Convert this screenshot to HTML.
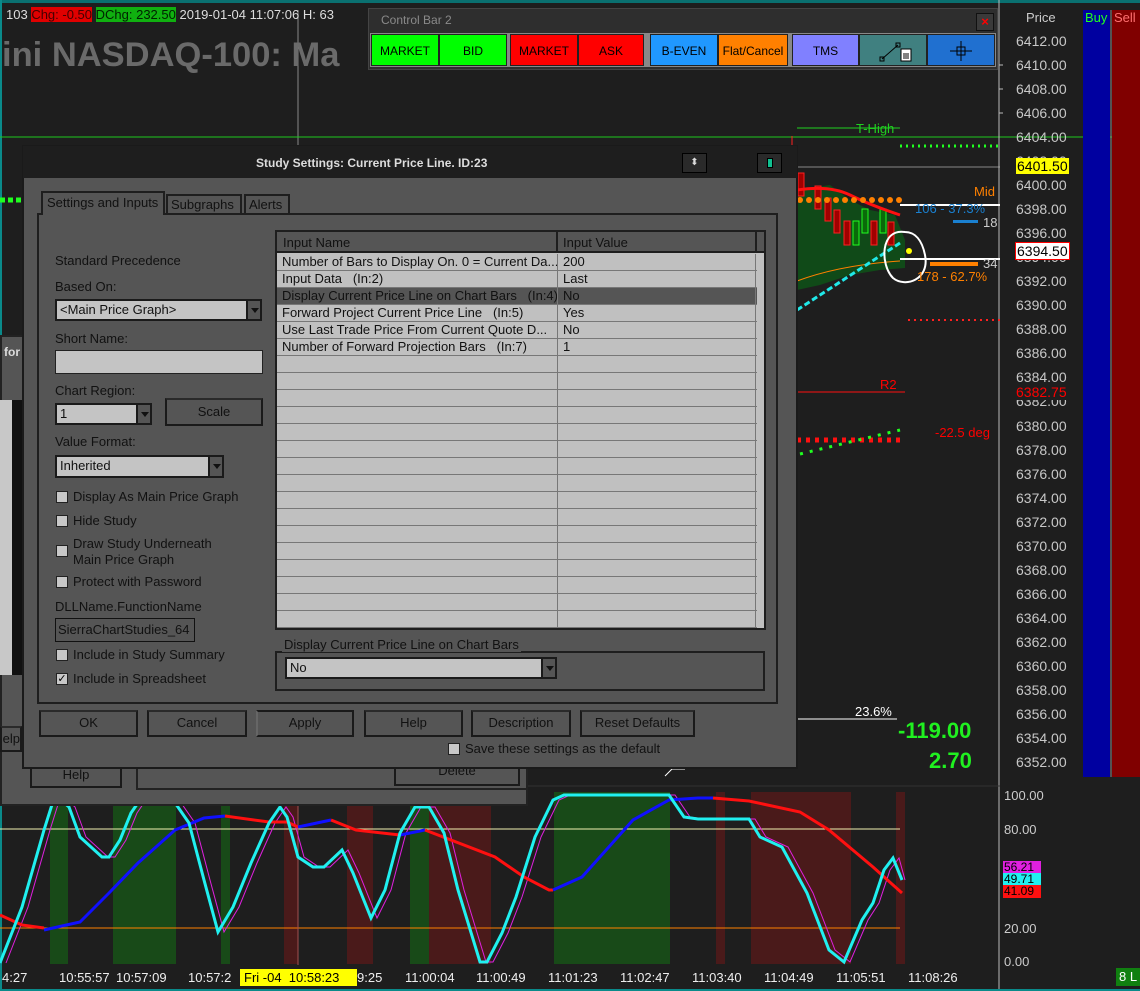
<!DOCTYPE html>
<html><head><meta charset="utf-8"><style>
*{margin:0;padding:0;box-sizing:border-box}
body{width:1140px;height:991px;background:#1e1e1e;position:relative;overflow:hidden;font-family:"Liberation Sans",sans-serif;font-size:13px}
.a{position:absolute}
.t{position:absolute;white-space:nowrap}
.btn{position:absolute;background:#555;border:2px solid #1a1a1a;border-top-color:#2a2a2a;color:#111;text-align:center;font-size:13px;line-height:22px}
.cb{position:absolute;width:12px;height:12px;background:#c8c8c8;border:1px solid #222}
.combo{position:absolute;background:#c4c4c4;border:2px solid #1a1a1a;color:#111;padding-left:3px;font-size:13px;line-height:18px}
.combo i{position:absolute;right:0;top:0;width:14px;height:100%;background:#555;border-left:2px solid #1a1a1a}
.combo i:after{content:"";position:absolute;left:3px;top:7px;border:4px solid transparent;border-top:5px solid #111}
.cbtn{position:absolute;top:34px;height:32px;color:#000;font-size:12px;text-align:center;line-height:32px;border:1px solid #222}
.row{position:absolute;left:0;width:480px;height:17px;border-bottom:1px solid #777;background:#c0c0c0;color:#111;font-size:13px;line-height:16px}
.row span{position:absolute;left:5px}
.row b{font-weight:normal;position:absolute;left:286px}
</style></head><body>
<svg class="a" style="left:0;top:0" width="1140" height="991">
<rect x="0" y="0" width="1140" height="3" fill="#0a7070"/>
<rect x="0" y="0" width="2" height="991" fill="#0a8a8a"/>
<line x1="298" y1="10" x2="298" y2="145" stroke="#888"/>
<line x1="0" y1="137" x2="1140" y2="137" stroke="#1ec81e"/>
<line x1="797" y1="167" x2="1000" y2="167" stroke="#888"/>
<line x1="999" y1="0" x2="999" y2="991" stroke="#bbb"/>
<rect x="1083" y="10" width="27" height="767" fill="#0000a0"/>
<rect x="1112" y="10" width="28" height="767" fill="#800000"/>
<line x1="1111" y1="10" x2="1111" y2="777" stroke="#888"/>
<line x1="0" y1="990" x2="1140" y2="990" stroke="#0a8a8a" stroke-width="2"/>
<line x1="0" y1="786" x2="1000" y2="786" stroke="#333"/>
<polygon points="797,190 830,185 850,200 870,210 895,215 905,240 905,268 880,270 850,275 820,285 797,290" fill="#104a18"/>
<g fill="#a00000" stroke="#ff2020">
<rect x="798" y="173" width="6" height="23"/><rect x="815" y="186" width="6" height="23"/><rect x="825" y="198" width="6" height="23"/><rect x="834" y="210" width="6" height="23"/><rect x="844" y="221" width="6" height="24"/><rect x="871" y="221" width="6" height="24"/><rect x="888" y="222" width="6" height="23"/></g>
<g fill="#0a6a0a" stroke="#20ff20"><rect x="853" y="221" width="6" height="24"/><rect x="862" y="209" width="6" height="24"/><rect x="880" y="209" width="6" height="24"/></g>
<path d="M797,190 Q830,185 850,195 T900,215" stroke="#ff1010" stroke-width="3" fill="none"/>
<g fill="#ff8000"><circle cx="800" cy="200" r="3"/><circle cx="809" cy="200" r="3"/><circle cx="818" cy="200" r="3"/><circle cx="827" cy="200" r="3"/><circle cx="836" cy="200" r="3"/><circle cx="845" cy="200" r="3"/><circle cx="854" cy="200" r="3"/><circle cx="863" cy="200" r="3"/><circle cx="872" cy="200" r="3"/><circle cx="881" cy="200" r="3"/><circle cx="890" cy="200" r="3"/><circle cx="899" cy="200" r="3"/></g>
<path d="M797,281 Q840,265 900,261" stroke="#ff8000" fill="none"/>
<path d="M797,310 L900,243" stroke="#20e8e8" stroke-width="3" stroke-dasharray="6,3" fill="none"/>
<path d="M905,232 C880,228 880,265 893,278 C905,288 930,280 925,255 C922,240 915,232 905,232Z" stroke="#fff" stroke-width="2" fill="none"/>
<circle cx="909" cy="251" r="3" fill="#ffff00"/>
<line x1="900" y1="205" x2="1000" y2="205" stroke="#fff" stroke-width="2"/>
<line x1="900" y1="259" x2="1000" y2="259" stroke="#fff" stroke-width="2"/>
<rect x="953" y="220" width="25" height="3" fill="#1a80d0"/>
<rect x="930" y="262" width="48" height="4" fill="#ff8000"/>
<line x1="900" y1="146" x2="1000" y2="146" stroke="#20ff20" stroke-width="3" stroke-dasharray="2,4"/>
<line x1="908" y1="320" x2="1000" y2="320" stroke="#ff2020" stroke-width="2" stroke-dasharray="2,4"/>
<line x1="797" y1="392" x2="905" y2="392" stroke="#ff1010"/>
<line x1="797" y1="128" x2="900" y2="128" stroke="#20d020"/>
<line x1="792" y1="136" x2="792" y2="145" stroke="#ff2020"/>
<line x1="797" y1="440" x2="903" y2="440" stroke="#ff1010" stroke-width="5" stroke-dasharray="4,5"/>
<path d="M800,454 L900,430" stroke="#20ff20" stroke-width="3" stroke-dasharray="3,7"/>
<line x1="0" y1="200" x2="22" y2="200" stroke="#20ff20" stroke-width="5" stroke-dasharray="5,3"/>
<line x1="797" y1="719" x2="897" y2="719" stroke="#fff"/>
<path d="M665,776 L672,769 L685,769" stroke="#fff" fill="none"/>
<g stroke="#bbb"><line x1="999" y1="65" x2="1003" y2="65"/><line x1="999" y1="89" x2="1003" y2="89"/><line x1="999" y1="113" x2="1003" y2="113"/></g>
<g fill="#184a18"><rect x="50" y="792" width="18" height="172"/><rect x="113" y="792" width="63" height="172"/><rect x="221" y="792" width="9" height="172"/><rect x="410" y="792" width="19" height="172"/><rect x="554" y="792" width="116" height="172"/></g>
<g fill="#4a1a1a"><rect x="284" y="792" width="14" height="172"/><rect x="347" y="792" width="26" height="172"/><rect x="429" y="792" width="62" height="172"/><rect x="716" y="792" width="9" height="172"/><rect x="751" y="792" width="100" height="172"/><rect x="896" y="792" width="9" height="172"/></g>
<line x1="0" y1="829" x2="900" y2="829" stroke="#f0f0b0"/>
<line x1="0" y1="928" x2="900" y2="928" stroke="#ff8000"/>
<line x1="298" y1="792" x2="298" y2="965" stroke="#a05050"/>
<polyline points="6,963 28,907 50,830 61,795 75,807 86,837 108,857 115,857 126,840 137,813 148,797 177,797 195,823 210,880 224,932 239,907 257,863 275,823 286,807 293,817 304,857 319,867 330,867 348,850 359,873 377,918 391,890 406,833 421,807 435,807 450,833 464,890 486,962 493,962 508,933 522,897 541,837 559,800 570,795 675,795 690,817 704,819 755,819 766,837 788,847 813,893 835,950 850,962 868,920 879,903 890,870 899,858 905,880" fill="none" stroke="#e020e0" stroke-width="1"/>
<polyline points="0,915 22,925 44,928" fill="none" stroke="#ff1010" stroke-width="3"/>
<polyline points="44,930 80,922 109,893 138,863 175,830 204,818 225,816" fill="none" stroke="#1010ff" stroke-width="3"/>
<polyline points="225,816 269,822 287,822 298,827" fill="none" stroke="#ff1010" stroke-width="3"/>
<polyline points="298,827 331,820" fill="none" stroke="#1010ff" stroke-width="3"/>
<polyline points="331,820 356,830 400,835" fill="none" stroke="#ff1010" stroke-width="3"/>
<polyline points="400,835 425,830" fill="none" stroke="#1010ff" stroke-width="3"/>
<polyline points="425,830 495,857 524,877 549,890 553,890" fill="none" stroke="#ff1010" stroke-width="3"/>
<polyline points="553,890 582,877 633,820 669,800 698,798 713,798" fill="none" stroke="#1010ff" stroke-width="3"/>
<polyline points="713,798 749,801 800,812 829,830 873,867 902,893" fill="none" stroke="#ff1010" stroke-width="3"/>
<polyline points="0,963 22,907 44,830 55,795 69,807 80,837 102,857 109,857 120,840 131,813 142,797 171,797 189,823 204,880 218,932 233,907 251,863 269,823 280,807 287,817 298,857 313,867 324,867 342,850 353,873 371,918 385,890 400,833 415,807 429,807 444,833 458,890 480,962 487,962 502,933 516,897 535,837 553,800 564,795 669,795 684,817 698,819 749,819 760,837 782,847 807,893 829,950 844,962 862,920 873,903 884,870 893,858 902,880" fill="none" stroke="#20f0f0" stroke-width="3"/>
<rect x="1003" y="861" width="38" height="12" fill="#e020e0"/><rect x="1003" y="873" width="38" height="12" fill="#20f0f0"/><rect x="1003" y="885" width="38" height="13" fill="#ff1010"/>
<rect x="1116" y="968" width="24" height="18" fill="#108010"/>
<rect x="240" y="969" width="117" height="17" fill="#ffff00"/>
</svg>

<div class="t" style="left:6px;top:7px;color:#ddd;font-size:13px">103 <span style="background:#e00000;color:#400">Chg: -0.50</span> <span style="background:#10b010;color:#020">DChg: 232.50</span> 2019-01-04 11:07:06 H: 63</div>
<div class="t" style="left:2px;top:36px;color:#6a6a6a;font-size:34.5px;font-weight:bold">ini NASDAQ-100: Ma</div>
<div class="t" style="left:1026px;top:10px;color:#ccc;font-size:13px">Price</div>
<div class="t" style="left:1085px;top:10px;color:#20ff20;font-size:13px">Buy</div>
<div class="t" style="left:1114px;top:10px;color:#ff7070;font-size:13px">Sell</div>
<div class="a" style="left:1016px;top:29px;color:#c8c8c8;font-size:14px;line-height:24.03px">6412.00<br>6410.00<br>6408.00<br>6406.00<br>6404.00<br>6402.00<br>6400.00<br>6398.00<br>6396.00<br>6394.00<br>6392.00<br>6390.00<br>6388.00<br>6386.00<br>6384.00<br>6382.00<br>6380.00<br>6378.00<br>6376.00<br>6374.00<br>6372.00<br>6370.00<br>6368.00<br>6366.00<br>6364.00<br>6362.00<br>6360.00<br>6358.00<br>6356.00<br>6354.00<br>6352.00</div>
<div class="t" style="left:1016px;top:158px;background:#ffff00;color:#000;font-size:14px;padding:0 1px">6401.50</div>
<div class="t" style="left:1015px;top:242px;background:#fff;border:1px solid #f00;color:#000;font-size:14px;padding:0 1px">6394.50</div>
<div class="t" style="left:1016px;top:384px;background:#1e1e1e;color:#f00;font-size:14px">6382.75</div>
<div class="t" style="left:856px;top:121px;color:#20d020">T-High</div>
<div class="t" style="left:974px;top:184px;color:#ff8000">Mid</div>
<div class="t" style="left:915px;top:201px;color:#1a80d0">106 - 37.3%</div>
<div class="t" style="left:983px;top:215px;color:#ccc">18</div>
<div class="t" style="left:983px;top:256px;color:#ccc">34</div>
<div class="t" style="left:917px;top:269px;color:#ff8000">178 - 62.7%</div>
<div class="t" style="left:880px;top:377px;color:#f00">R2</div>
<div class="t" style="left:935px;top:425px;color:#f00">-22.5 deg</div>
<div class="t" style="left:855px;top:704px;color:#fff">23.6%</div>
<div class="t" style="left:898px;top:718px;color:#20f020;font-size:22px;font-weight:bold">-119.00</div>
<div class="t" style="left:929px;top:748px;color:#20f020;font-size:22px;font-weight:bold">2.70</div>
<div class="t" style="left:1004px;top:788px;color:#ccc">100.00</div>
<div class="t" style="left:1004px;top:822px;color:#ccc">80.00</div>
<div class="t" style="left:1004px;top:921px;color:#ccc">20.00</div>
<div class="t" style="left:1004px;top:954px;color:#ccc">0.00</div>
<div class="t" style="left:1004px;top:860px;color:#000;font-size:12px">56.21</div>
<div class="t" style="left:1004px;top:872px;color:#000;font-size:12px">49.71</div>
<div class="t" style="left:1004px;top:884px;color:#000;font-size:12px">41.09</div>
<div class="t" style="left:1119px;top:969px;color:#fff">8 L</div>
<div class="t" style="top:970px;left:0;color:#eee;font-size:13px;width:1000px;height:18px">
<span class="t" style="left:2px">4:27</span><span class="t" style="left:59px">10:55:57</span><span class="t" style="left:116px">10:57:09</span><span class="t" style="left:188px">10:57:2</span><span class="t" style="left:244px;color:#000">Fri -04&nbsp; 10:58:23</span><span class="t" style="left:357px">9:25</span><span class="t" style="left:405px">11:00:04</span><span class="t" style="left:476px">11:00:49</span><span class="t" style="left:548px">11:01:23</span><span class="t" style="left:620px">11:02:47</span><span class="t" style="left:692px">11:03:40</span><span class="t" style="left:764px">11:04:49</span><span class="t" style="left:836px">11:05:51</span><span class="t" style="left:908px">11:08:26</span></div>

<div class="a" style="left:0;top:335px;width:528px;height:471px;background:#555;border:2px solid #222"></div>
<div class="t" style="left:4px;top:345px;color:#ddd;font-weight:bold;font-size:12px">for</div>
<div class="a" style="left:0;top:400px;width:12px;height:275px;background:#c8c8c8"></div>
<div class="a" style="left:12px;top:400px;width:10px;height:275px;background:#111"></div>
<div class="btn" style="left:0;top:726px;width:22px;height:26px;text-align:right">elp</div>
<div class="btn" style="left:30px;top:762px;width:92px;height:26px">Help</div>
<div class="a" style="left:136px;top:752px;width:392px;height:38px;border:2px solid #222"></div>
<div class="btn" style="left:394px;top:760px;width:126px;height:26px;line-height:18px">Delete</div>

<div class="a" style="left:368px;top:8px;width:630px;height:62px;background:#2e2e2e;border:1px solid #444"></div>
<div class="t" style="left:381px;top:13px;color:#8a8a8a;font-size:12px">Control Bar 2</div>
<div class="a" style="left:976px;top:13px;width:18px;height:18px;background:#3a3a3a;border:1px solid #111;color:#f00;font-size:13px;font-weight:bold;text-align:center;line-height:16px">×</div>
<div class="a" style="left:370px;top:33px;width:626px;height:34px;background:#888"></div>
<div class="cbtn" style="left:371px;width:68px;background:#00ff00">MARKET</div>
<div class="cbtn" style="left:439px;width:68px;background:#00ff00">BID</div>
<div class="cbtn" style="left:510px;width:68px;background:#ff0000">MARKET</div>
<div class="cbtn" style="left:578px;width:66px;background:#ff0000">ASK</div>
<div class="cbtn" style="left:650px;width:68px;background:#2098ff">B-EVEN</div>
<div class="cbtn" style="left:718px;width:70px;background:#ff8000">Flat/Cancel</div>
<div class="cbtn" style="left:792px;width:67px;background:#8080ff">TMS</div>
<div class="cbtn" style="left:859px;width:68px;background:#408080"><svg width="66" height="30" style="position:absolute;left:0;top:0"><path d="M22,24 L38,10" stroke="#000"/><rect x="20" y="22" width="4" height="4" fill="none" stroke="#000"/><rect x="36" y="8" width="4" height="4" fill="none" stroke="#000"/><rect x="41" y="14" width="10" height="12" fill="#fff" stroke="#000"/><path d="M43,19h6M43,21h6M43,23h6" stroke="#000"/></svg></div>
<div class="cbtn" style="left:927px;width:68px;background:#2070d0"><svg width="66" height="30" style="position:absolute;left:0;top:0"><path d="M33,6V26M22,16H44" stroke="#000"/><rect x="29" y="12" width="8" height="8" fill="none" stroke="#000"/></svg></div>

<div class="a" style="left:22px;top:145px;width:776px;height:624px;background:#555;border:2px solid #1a1a1a"></div>
<div class="a" style="left:23px;top:146px;width:774px;height:32px;background:#1e1e1e"></div>
<div class="t" style="left:256px;top:156px;color:#ddd;font-size:12px;font-weight:bold">Study Settings: Current Price Line. ID:23</div>
<div class="a" style="left:682px;top:153px;width:25px;height:20px;border:1px solid #000;background:#2a2a2a;color:#ddd;font-size:10px;text-align:center;line-height:18px">⬍</div>
<div class="a" style="left:757px;top:153px;width:25px;height:20px;border:1px solid #000;background:#2a2a2a"><div class="a" style="left:9px;top:4px;width:6px;height:10px;background:#10c090;border:1px solid #000"></div></div>
<div class="a" style="left:37px;top:213px;width:741px;height:491px;border:2px solid #1e1e1e"></div>
<div class="a" style="left:41px;top:191px;width:124px;height:24px;background:#555;border:2px solid #1e1e1e;border-bottom:none"></div>
<div class="t" style="left:47px;top:195px;color:#111">Settings and Inputs</div>
<div class="a" style="left:166px;top:194px;width:76px;height:20px;border:2px solid #1e1e1e;border-bottom:none"></div>
<div class="t" style="left:171px;top:197px;color:#111">Subgraphs</div>
<div class="a" style="left:244px;top:194px;width:46px;height:20px;border:2px solid #1e1e1e;border-bottom:none"></div>
<div class="t" style="left:249px;top:197px;color:#111">Alerts</div>

<div class="t" style="left:55px;top:253px;color:#111">Standard Precedence</div>
<div class="t" style="left:55px;top:279px;color:#111">Based On:</div>
<div class="combo" style="left:55px;top:299px;width:207px;height:22px">&lt;Main Price Graph&gt;<i></i></div>
<div class="t" style="left:55px;top:331px;color:#111">Short Name:</div>
<div class="a" style="left:55px;top:350px;width:208px;height:24px;background:#c4c4c4;border:1px solid #222"></div>
<div class="t" style="left:55px;top:383px;color:#111">Chart Region:</div>
<div class="combo" style="left:55px;top:403px;width:97px;height:22px">1<i></i></div>
<div class="btn" style="left:165px;top:398px;width:98px;height:28px;line-height:24px">Scale</div>
<div class="t" style="left:55px;top:434px;color:#111">Value Format:</div>
<div class="combo" style="left:55px;top:455px;width:169px;height:23px">Inherited<i></i></div>
<div class="cb" style="left:56px;top:491px"></div><div class="t" style="left:73px;top:489px;color:#111">Display As Main Price Graph</div>
<div class="cb" style="left:56px;top:515px"></div><div class="t" style="left:73px;top:513px;color:#111">Hide Study</div>
<div class="cb" style="left:56px;top:545px"></div><div class="t" style="left:73px;top:536px;color:#111;line-height:16px">Draw Study Underneath<br>Main Price Graph</div>
<div class="cb" style="left:56px;top:576px"></div><div class="t" style="left:73px;top:574px;color:#111">Protect with Password</div>
<div class="t" style="left:55px;top:599px;color:#111">DLLName.FunctionName</div>
<div class="a" style="left:55px;top:618px;width:140px;height:24px;border:1px solid #111"></div>
<div class="t" style="left:58px;top:622px;color:#111">SierraChartStudies_64</div>
<div class="cb" style="left:56px;top:649px"></div><div class="t" style="left:73px;top:647px;color:#111">Include in Study Summary</div>
<div class="cb" style="left:56px;top:673px;font-size:11px;line-height:10px;text-align:center;color:#000">✓</div><div class="t" style="left:73px;top:671px;color:#111">Include in Spreadsheet</div>

<div class="a" style="left:275px;top:230px;width:491px;height:400px;background:#c0c0c0;border:2px solid #1e1e1e;overflow:hidden">
<div class="a" style="left:0;top:0;width:487px;height:21px;background:#555;border-bottom:2px solid #1e1e1e"></div>
<div class="t" style="left:6px;top:3px;color:#111">Input Name</div>
<div class="a" style="left:279px;top:0;width:2px;height:21px;background:#1e1e1e"></div>
<div class="t" style="left:286px;top:3px;color:#111">Input Value</div>
<div class="a" style="left:478px;top:0;width:2px;height:21px;background:#1e1e1e"></div>
<div class="row" style="top:22px"><span>Number of Bars to Display On. 0 = Current Da...</span><b>200</b></div>
<div class="row" style="top:39px"><span>Input Data &nbsp; (In:2)</span><b>Last</b></div>
<div class="row" style="top:56px;background:#555"><span>Display Current Price Line on Chart Bars &nbsp; (In:4)</span><b>No</b></div>
<div class="row" style="top:73px"><span>Forward Project Current Price Line &nbsp; (In:5)</span><b>Yes</b></div>
<div class="row" style="top:90px"><span>Use Last Trade Price From Current Quote D...</span><b>No</b></div>
<div class="row" style="top:107px"><span>Number of Forward Projection Bars &nbsp; (In:7)</span><b>1</b></div>
<div class="row" style="top:124px"></div><div class="row" style="top:141px"></div><div class="row" style="top:158px"></div><div class="row" style="top:175px"></div><div class="row" style="top:192px"></div><div class="row" style="top:209px"></div><div class="row" style="top:226px"></div><div class="row" style="top:243px"></div><div class="row" style="top:260px"></div><div class="row" style="top:277px"></div><div class="row" style="top:294px"></div><div class="row" style="top:311px"></div><div class="row" style="top:328px"></div><div class="row" style="top:345px"></div><div class="row" style="top:362px"></div><div class="row" style="top:379px"></div>
<div class="a" style="left:280px;top:22px;width:1px;height:380px;background:#777"></div>
<div class="a" style="left:478px;top:22px;width:1px;height:380px;background:#777"></div>
</div>
<div class="a" style="left:275px;top:651px;width:490px;height:40px;border:2px solid #1e1e1e"></div>
<div class="t" style="left:282px;top:637px;color:#111;background:#555;padding:0 2px">Display Current Price Line on Chart Bars</div>
<div class="combo" style="left:285px;top:657px;width:272px;height:22px">No<i></i></div>

<div class="btn" style="left:39px;top:710px;width:99px;height:27px">OK</div>
<div class="btn" style="left:147px;top:710px;width:100px;height:27px">Cancel</div>
<div class="btn" style="left:256px;top:710px;width:98px;height:27px;border-color:#1a1a1a #1a1a1a #1a1a1a #666">Apply</div>
<div class="btn" style="left:364px;top:710px;width:99px;height:27px">Help</div>
<div class="btn" style="left:471px;top:710px;width:100px;height:27px">Description</div>
<div class="btn" style="left:580px;top:710px;width:115px;height:27px">Reset Defaults</div>
<div class="cb" style="left:448px;top:743px"></div><div class="t" style="left:465px;top:741px;color:#111">Save these settings as the default</div>
</body></html>
